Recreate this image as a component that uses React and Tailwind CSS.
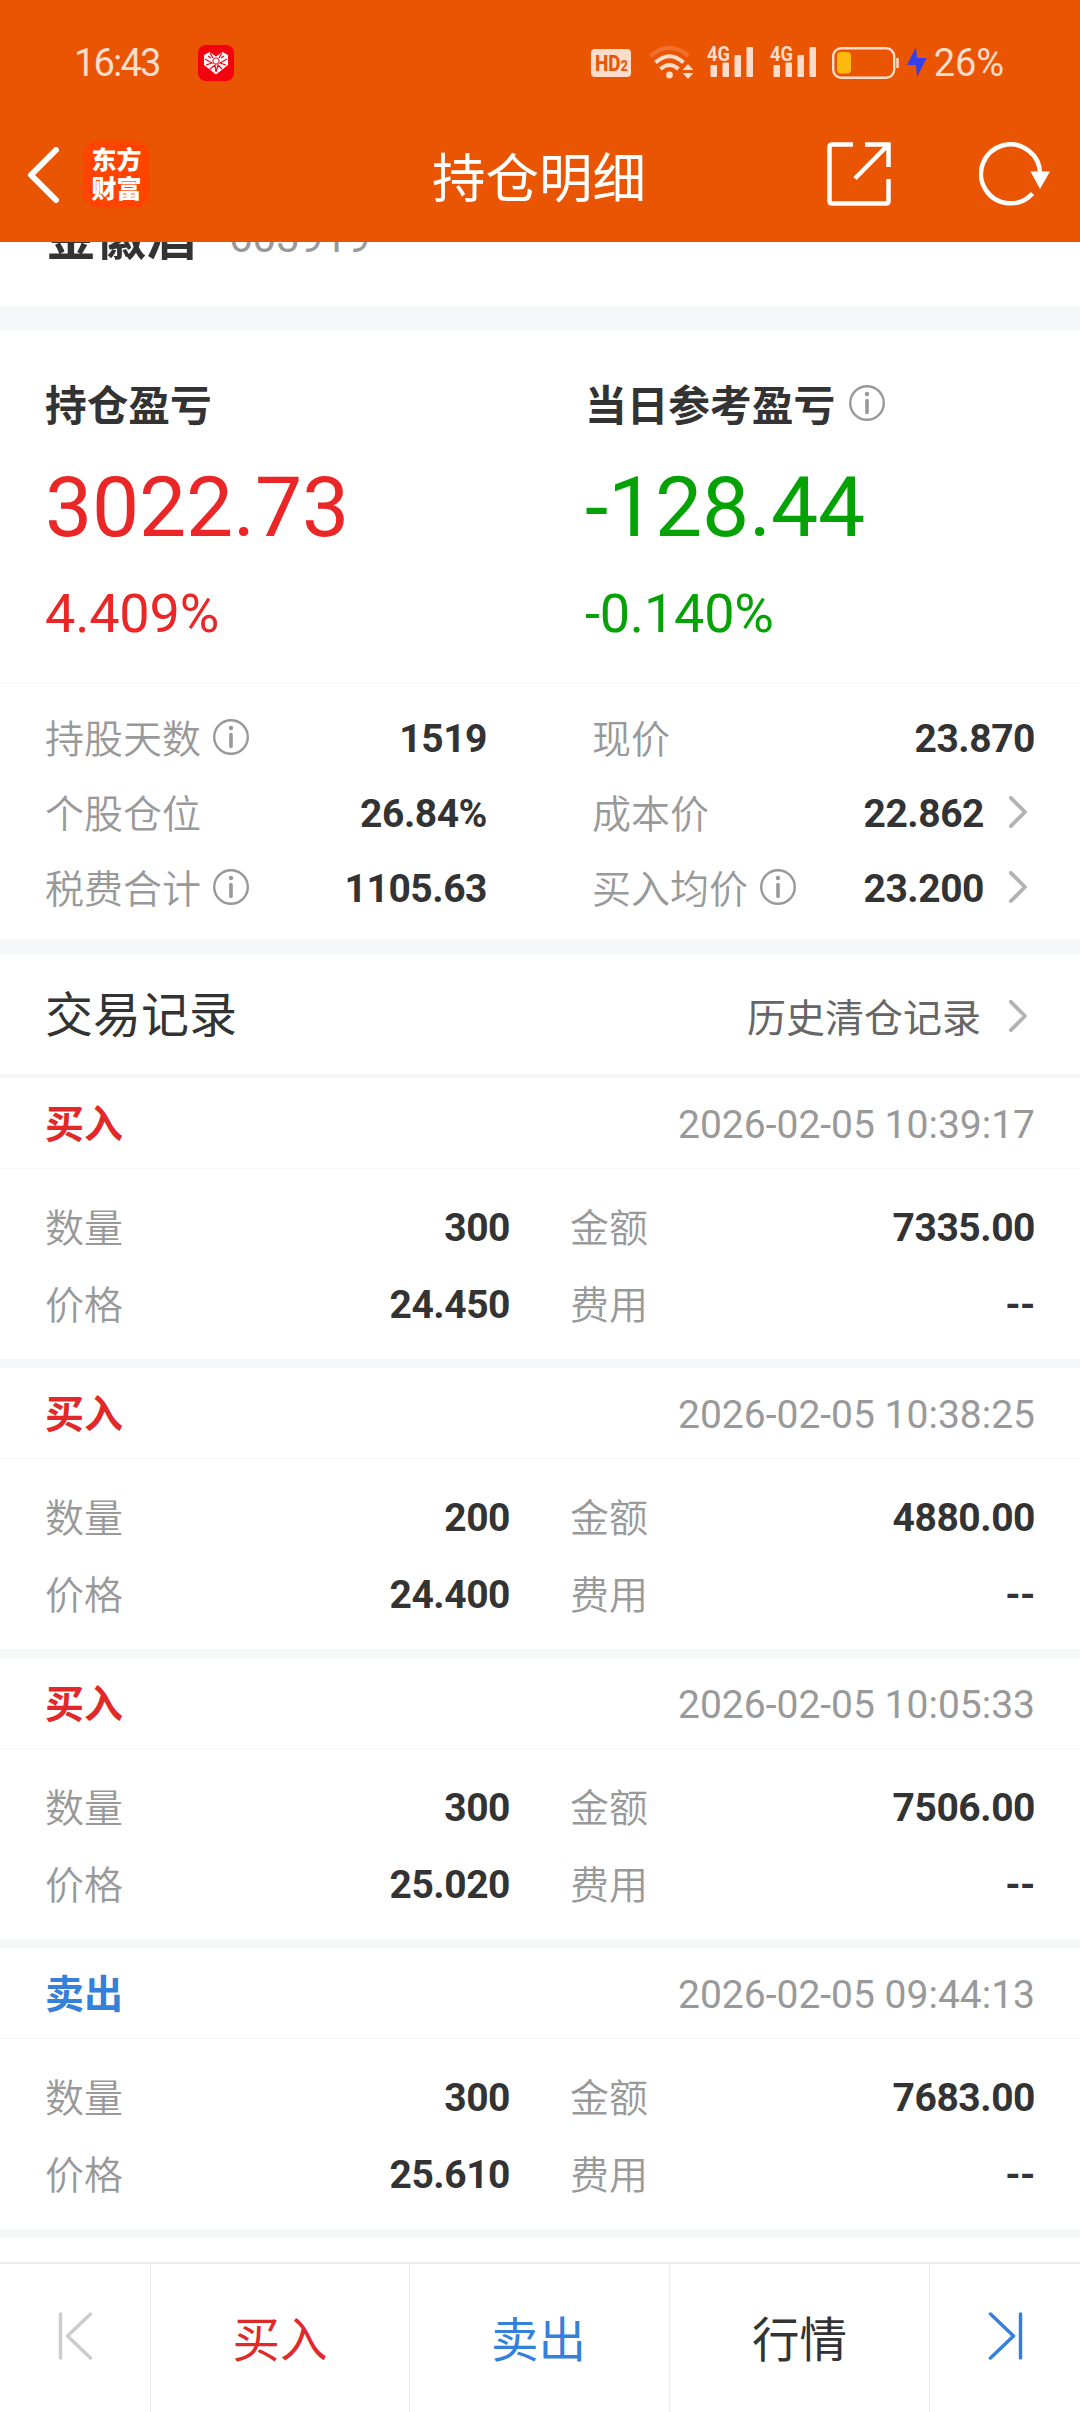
import React from "react";

const stats = [
    [
        { label: "持股天数", value: "1519", info: true },
        { label: "个股仓位", value: "26.84%" },
        { label: "税费合计", value: "1105.63", info: true },
    ],
    [
        { label: "现价", value: "23.870" },
        { label: "成本价", value: "22.862", arrow: true },
        { label: "买入均价", value: "23.200", info: true, arrow: true },
    ],
];

const records = [
    { type: "buy", time: "2026-02-05 10:39:17", count: "300", price: "24.450", amount: "7335.00", fee: "--" },
    { type: "buy", time: "2026-02-05 10:38:25", count: "200", price: "24.400", amount: "4880.00", fee: "--" },
    { type: "buy", time: "2026-02-05 10:05:33", count: "300", price: "25.020", amount: "7506.00", fee: "--" },
    { type: "sell", time: "2026-02-05 09:44:13", count: "300", price: "25.610", amount: "7683.00", fee: "--" },
];

const InfoIcon = () => (
    <svg className="mb-1 size-9 shrink-0" viewBox="0 0 36 36" fill="none">
        <circle cx="18" cy="18" r="16.8" stroke="#999" strokeWidth="2.4" />
        <circle cx="18" cy="9" r="2.2" fill="#999" />
        <path d="M18 15.5v12" stroke="#999" strokeWidth="3.6" strokeLinecap="round" />
    </svg>
);

const ArrowIcon = () => (
    <svg className="h-8 w-[18px] shrink-0" viewBox="0 0 18 32" fill="none">
        <path d="M1.8 1.8L16 16L1.8 30.2" stroke="#b3b3b3" strokeWidth="3.8" strokeLinecap="round" strokeLinejoin="round" />
    </svg>
);

const Signal = () => (
    <svg className="h-[34px] w-[46px] shrink-0 overflow-visible" viewBox="0 0 46 34" fill="#fcdcca">
        <text x="0" y="14.500" fontSize="21" fontWeight="700" textLength="23" lengthAdjust="spacingAndGlyphs">4G</text>
        <rect x="3.5" y="19" width="6.5" height="12" rx="1" />
        <rect x="15.5" y="16.5" width="6.5" height="14.5" rx="1" />
        <rect x="27.5" y="9" width="6.5" height="22" rx="1" />
        <rect x="39.5" y="1" width="6.5" height="30" rx="1" />
    </svg>
);

const StatusBar = () => (
    <div className="flex h-[124px] items-center pl-[74px] pr-[76px] pt-0.5 text-[38px] text-[#fcdcca]">
        <span className="w-[124px] tracking-[-1.8px]">16:43</span>
        <svg className="size-9" viewBox="0 0 36 36">
            <rect width="36" height="36" rx="8" fill="#f5000f" />
            <path d="M18 29.500L6 20V10L11.500 7L18 11.500L24.500 7L30 10V20Z" fill="#fff" />
            <path d="M7 14L14 18L8 20M29 14L22 18L28 20M12 8L15 13M24 8L21 13M12 24L17 20L18 27L20 20L24 24M10 11L13 13M26 11L23 13" stroke="#f5000f" strokeWidth="1.2" fill="none" />
            <circle cx="18" cy="16" r="3.2" fill="none" stroke="#f5000f" strokeWidth="1" />
        </svg>
        <div className="ml-auto flex items-center">
            <svg className="mr-[18px] h-7 w-10" viewBox="0 0 40 28">
                <rect width="40" height="28" rx="4" fill="#fcdcca" />
                <text x="4" y="22" fontSize="22" fontWeight="800" fill="#ea5504" textLength="33" lengthAdjust="spacingAndGlyphs">
                    HD<tspan fontSize="15">2</tspan>
                </text>
            </svg>
            <svg className="mr-3.5 h-[34px] w-11" viewBox="0 1 44 34" fill="none" stroke="#fcdcca" strokeWidth="4">
                <path d="M1.500 11Q20.500 -5 39.500 11" stroke="#f2702f" />
                <path d="M6.500 17.500Q20.500 5 34.500 17.500M11.500 24Q20.500 16 29.500 24" />
                <circle cx="20.500" cy="30" r="3.400" fill="#fcdcca" stroke="none" />
                <path d="M33.500 25L39 19L44.500 25ZM33.500 28H44.500L39 34Z" fill="#fcdcca" stroke="none" />
            </svg>
            <Signal />
            <span className="w-[17px]" />
            <Signal />
            <svg className="ml-4 mr-2 h-8 w-[67px]" viewBox="0 0 67 32" fill="none">
                <rect x="1.200" y="1.200" width="61" height="29.500" rx="8" stroke="#fcdcca" strokeWidth="2.400" />
                <rect x="5" y="5" width="14" height="21.500" rx="4" fill="#ffb80e" />
                <path d="M65.500 11v10" stroke="#fcdcca" strokeWidth="2.500" />
            </svg>
            <svg className="mb-0.5 mr-[7px] h-[30px] w-5" viewBox="0 0 20 30" fill="#3340ec">
                <path d="M9 0L0 18H9L10 30L19.500 11H10Z" />
            </svg>
            <span className="tracking-[-0.1px]">26%</span>
        </div>
    </div>
);

const TitleBar = () => (
    <div className="grid h-[118px] grid-cols-3 items-start text-white">
        <div className="flex items-center pl-[27px] pt-[17px]">
            <svg className="mr-6 h-[56px] w-8" viewBox="0 0 32 56" fill="none">
                <path d="M29 3L4 28L29 53" stroke="#fff" strokeWidth="6" strokeLinecap="round" strokeLinejoin="round" />
            </svg>
            <div className="flex size-[67px] flex-col items-center justify-center rounded-2xl bg-[#ff4400] text-[25px] font-black leading-[29px]">
                <span>东方</span>
                <span>财富</span>
            </div>
        </div>
        <h1 className="-ml-0.5 pt-4 text-center text-[53.5px] leading-[80px]">持仓明细</h1>
        <div className="flex justify-end pr-[30px] pt-[18px]">
            <svg className="mr-[88px] h-16 w-16" viewBox="0 0 64 64" fill="none" stroke="#fff" strokeWidth="4.500">
                <path d="M26 2.500H5Q2.500 2.500 2.500 5V59Q2.500 61.500 5 61.500H59Q61.500 61.500 61.500 59V37" />
                <path d="M38 2.500H61.500V25M61 3L28 36.500" />
            </svg>
            <svg className="h-16 w-[71px]" viewBox="0 0 71 64" fill="none">
                <path d="M61 32A29.500 29.500 0 1 0 53.500 51.500" stroke="#fff" strokeWidth="4.500" />
                <path d="M51.500 29.500H71L61 47Z" fill="#fff" />
            </svg>
        </div>
    </div>
);

const Profit = ({ title, value, percent, color, info }) => (
    <div className="w-1/2 pl-[45px]">
        <div className="flex h-[42px] items-center text-[41.7px] font-bold text-[#333]">
            <span className="mr-3.5 pt-1">{title}</span>
            {info && <InfoIcon />}
        </div>
        <div className={`mt-[35px] text-[84px] leading-[94px] tracking-[-0.2px] ${color}`}>{value}</div>
        <div className={`mt-[29px] text-[54px] leading-[60px] tracking-[-0.2px] ${color}`}>{percent}</div>
    </div>
);

const StatRow = ({ label, value, info, arrow }) => (
    <div className="flex h-[75px] items-center">
        <span className="mr-3 pt-[3px] font-[350] text-[#999]">{label}</span>
        {info && <InfoIcon />}
        <span className="ml-auto pt-0.5 font-bold tracking-[-0.45px] text-[#333]">{value}</span>
        {arrow && (
            <span className="mb-1 ml-[25px] mr-2 flex">
                <ArrowIcon />
            </span>
        )}
    </div>
);

const Field = ({ label, value }) => (
    <div className="flex items-center justify-between pt-0.5">
        <span className="pt-px font-[350] text-[#999]">{label}</span>
        <span className="font-bold tracking-[-0.45px] text-[#333]">{value}</span>
    </div>
);

const RecordCard = ({ record }) => (
    <div className="h-[290px] border-b-[9px] border-[#f6f7f9] text-[39px]">
        <div className="flex h-[91px] items-center justify-between border-b border-[#f4f5f6] pl-[45px] pr-[45px] pt-[5px]">
            <span className={record.type === "buy" ? "font-bold text-[#e22828]" : "font-bold text-[#3580d8]"}>
                {record.type === "buy" ? "买入" : "卖出"}
            </span>
            <span className="text-[#999]">{record.time}</span>
        </div>
        <div className="grid grid-cols-[465px_465px] grid-rows-[77px_77px] gap-x-[60px] pl-[45px] pt-5">
            <Field label="数量" value={record.count} />
            <Field label="金额" value={record.amount} />
            <Field label="价格" value={record.price} />
            <Field label="费用" value={record.fee} />
        </div>
    </div>
);

const BottomBar = () => (
    <div className="grid h-[150px] shrink-0 grid-cols-[151px_259px_260px_260px_150px] border-t-2 border-[#ececec] bg-white text-center text-[47.5px] leading-[154px]">
        <div className="border-r border-[#ececec] pl-[58px] pt-12">
            <svg className="h-12 w-9" viewBox="0 0 36 48" fill="none" stroke="#ccc" strokeWidth="3.500" strokeLinecap="round" strokeLinejoin="round">
                <path d="M2.500 2V46M32.500 2L9.500 24L32.500 46" />
            </svg>
        </div>
        <div className="border-r border-[#ececec] text-[#e02a2a]">买入</div>
        <div className="border-r border-[#ececec] pr-0.5 text-[#3580d8]">卖出</div>
        <div className="border-r border-[#ececec] text-[#333]">行情</div>
        <div className="pl-[58px] pt-12">
            <svg className="h-12 w-9" viewBox="0 0 36 48" fill="none" stroke="#3580d8" strokeWidth="3.500" strokeLinecap="round" strokeLinejoin="round">
                <path d="M32.500 2V46M2.500 2L25.500 24L2.500 46" />
            </svg>
        </div>
    </div>
);

export default function App() {
    return (
        <div className="flex h-[2412px] w-[1080px] flex-col overflow-hidden bg-white font-['Roboto','Noto_Sans_CJK_SC',sans-serif]">
            <header className="z-10 h-[242px] shrink-0 bg-[#ea5504]">
                <StatusBar />
                <TitleBar />
            </header>

            <main className="flex min-h-0 flex-1 flex-col">
                {/* Stock name, scrolled partly under the header */}
                <div className="flex h-16 shrink-0 items-end overflow-hidden pl-[46px]">
                    <span className="pb-[38px] text-[50px] font-bold leading-[60px] text-[#333]">金徽酒</span>
                    <span className="ml-[33px] pb-[38px] text-[42px] leading-[60px] text-[#999]">603919</span>
                </div>

                <section className="h-[378px] shrink-0 border-t-[24px] border-[#f6f7f9]">
                    <div className="flex h-[354px] border-b border-[#f4f5f6] pt-[54px]">
                        <Profit title="持仓盈亏" value="3022.73" percent="4.409%" color="text-[#ea2626]" />
                        <Profit title="当日参考盈亏" value="-128.44" percent="-0.140%" color="text-[#04a204]" info />
                    </div>
                </section>

                <section className="flex h-[270px] shrink-0 border-b-[15px] border-[#f6f7f9] pl-[45px] pt-[17px] text-[39px]">
                    <div className="w-[442px]">
                        {stats[0].map((row) => <StatRow key={row.label} {...row} />)}
                    </div>
                    <div className="ml-[105px] w-[443px]">
                        {stats[1].map((row) => <StatRow key={row.label} {...row} />)}
                    </div>
                </section>

                <div className="flex h-[124px] shrink-0 items-center border-b-4 border-[#f6f7f9] pl-[45px] pr-[53px] pt-1">
                    <h2 className="text-[48px] text-[#333]">交易记录</h2>
                    <span className="ml-auto mr-[28px] pt-1.5 text-[39px] text-[#666]">历史清仓记录</span>
                    <ArrowIcon />
                </div>

                {records.map((record) => <RecordCard key={record.time} record={record} />)}
            </main>

            <BottomBar />
        </div>
    );
}
